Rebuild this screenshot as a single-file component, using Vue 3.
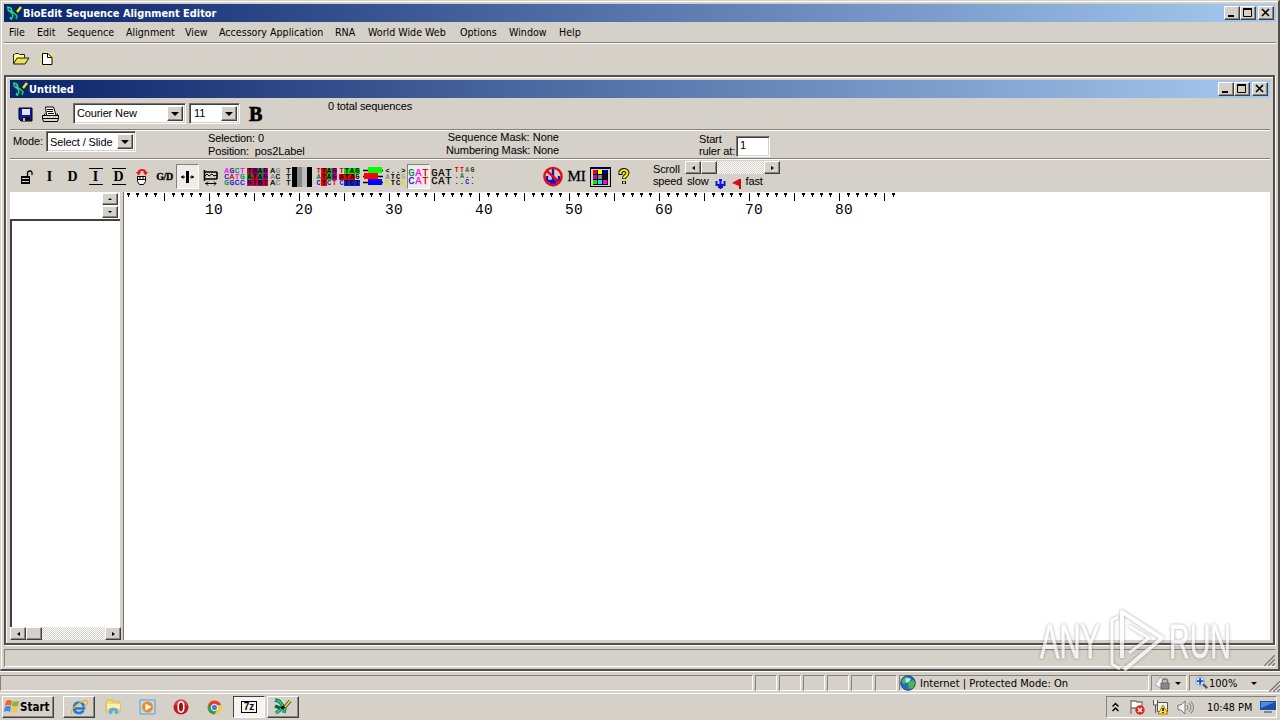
<script setup>
import {ref} from "vue";

const menu = [
    { text: 'File', width: 28 },
    { text: 'Edit', width: 30 },
    { text: 'Sequence', width: 59 },
    { text: 'Alignment', width: 59 },
    { text: 'View', width: 34 },
    { text: 'Accessory Application', width: 116 },
    { text: 'RNA', width: 33 },
    { text: 'World Wide Web', width: 92 },
    { text: 'Options', width: 49 },
    { text: 'Window', width: 50 },
    { text: 'Help', width: 30 },
];

const font = ref('Courier New');
const fontSize = ref('11');
const mode = ref('Select / Slide');
const rulerStart = ref('1');

const m = '#f0f', b = '#11c', g = '#084', r = '#d00', k = '#000', w = '#888', l = '#0d0', y = '#dd0', p = '#c0a';

// small letter grids: [letter, colour, background]
const grids = [
    { size: 8, rows: [[['A', m], ['G', b], ['C', g], ['T', m]], [['C', b], ['A', r], ['T', m], ['G', g]], [['G', g], ['G', b], ['C', b], ['C', b]]] },
    { size: 7, bold: true, rows: [[['T', k, '#c03'], ['G', k, '#808'], ['A', k, '#093'], ['G', k, p]], [['A', k, '#093'], ['T', k, '#c03'], ['A', k, '#084'], ['G', k, p]], [['G', k, p], ['T', k, '#c03'], ['G', k, '#808'], ['T', k, '#c03']]] },
    { size: 8, rows: [[['A', k], ['G', w], ['', k], ['T', k]], [['A', w], ['C', k], ['', k], ['T', k]], [['A', k], ['C', w], ['', k], ['T', k]]] },
    { bars: true },
    { size: 7, bold: true, rows: [[['T', r], ['T', k, '#e00'], ['A', k, '#0b3'], ['G', k, p]], [['A', g], ['T', k, '#e00'], ['A', k, '#0b3'], ['G', k, p]], [['C', b], ['T', k, '#e00'], ['C', b], ['T', r]]] },
    { size: 7, bold: true, rows: [[['T', r], ['T', k, l], ['A', k, l], ['G', k, l]], [['A', k, '#e00'], ['T', k, '#e00'], ['A', k, '#e00'], ['G', k]], [['C', b], ['T', k, '#12d'], ['C', k, '#12d'], ['T', k, '#12d']]] },
    { blocks: true },
    { size: 7, bold: true, rows: [[['<', k], ['.', k], ['.', k], ['>', k]], [['A', w], ['T', k], ['C', k], ['G', '#aa7']], [['G', y], ['T', k], ['C', k], ['G', y]]] },
    { size: 10.5, pressed: true, rows: [[['G', g], ['A', m], ['T', r]], [['C', b], ['A', m], ['T', r]]] },
    { size: 10.5, rows: [[['G', k], ['A', k], ['T', k]], [['C', k], ['A', k], ['T', k]]] },
    { size: 6.5, bold: true, rows: [[['T', r], ['T', r], ['A', '#464'], ['G', '#232']], [['.', k], ['A', g], ['.', k], ['.', k]], [['.', k], ['.', k], ['C', b], ['.', k]]] },
];

const ticks = Array.from({ length: 86 }, (_, i) => i + 1);
const panes = [22, 22, 22, 22, 22, 22];
const palette = ['#e00', '#ff0', '#00a', '#c0c', '#888', '#111', '#0e0', '#0ee', '#f0f'];
</script>

<template>
    <div class="desktop">
        <svg width="0" height="0" class="defs">
            <symbol id="helix" viewBox="0 0 17 17">
                <path d="M1 2l4 1 1 4 4 2M2 6l4 2 1 3-2 5M9 9l2 2-1 4" fill="none" stroke="#042e3c" stroke-width="3" />
                <path d="M1 2l4 1M5 3l1 4 4 2" fill="none" stroke="#2ce070" stroke-width="1.5" />
                <path d="M2 5l4 3 1 3-2 4M9 9l2 2-1 3" fill="none" stroke="#1cc890" stroke-width="1.6" />
                <path d="M2 3v2M4 6h2M5 12l-1 2" stroke="#3cf" stroke-width="1.3" />
                <path d="M9 8l3-3" stroke="#112" stroke-width="2" />
                <path d="M11 7l4-5" stroke="#f4e820" stroke-width="2.4" />
            </symbol>
            <symbol id="grip" viewBox="0 0 14 14">
                <path d="M2 14L14 2M6 14l8-8M10 14l4-4" stroke="#fff" stroke-width="1" />
                <path d="M3 14L14 3M7 14l7-7M11 14l3-3" stroke="#77736e" stroke-width="1.4" />
            </symbol>
        </svg>

        <div class="window">
            <div class="titlebar">
                <svg class="helix"><use href="#helix" /></svg>
                <span class="title">BioEdit Sequence Alignment Editor</span>
                <div class="controls">
                    <b><svg viewBox="0 0 14 12"><path d="M3 9h6" stroke="#000" stroke-width="2" /></svg></b>
                    <b><svg viewBox="0 0 14 12"><path d="M2.500 2v7.500h8V2" fill="none" stroke="#000" /><path d="M2 2h9" stroke="#000" stroke-width="2" /></svg></b>
                    <b class="close"><svg viewBox="0 0 14 12"><path d="M3 2l7 7M10 2l-7 7" stroke="#000" stroke-width="1.6" /></svg></b>
                </div>
            </div>
            <div class="menu">
                <span v-for="item in menu" :key="item.text" :style="{ width: item.width + 'px' }">{{ item.text }}</span>
            </div>
            <div class="toolbar">
                <svg width="18" height="14" viewBox="0 0 18 14">
                    <path d="M1.500 11.500v-9h1l1-1h3l1 1h5v3" fill="#ffff9c" stroke="#220" />
                    <path d="M1.500 12l3.500-6h12l-4 6z" fill="#e8e25c" stroke="#220" />
                </svg>
                <svg width="16" height="16" viewBox="0 0 16 16">
                    <path d="M1 2l2 2M1 8h2M1 14l2-2M7 0v2M14 2l-2 2M15 8h-2M14 14l-2-2M7 16v-2" stroke="#f4f040" stroke-width="2" />
                    <path d="M3.500 2.500h5.500l4 4v7h-9.500z" fill="#fff" stroke="#000" />
                    <path d="M8.500 2.500v4h4" fill="none" stroke="#000" />
                </svg>
            </div>

            <div class="mdi">
                <div class="titlebar child">
                    <svg class="helix"><use href="#helix" /></svg>
                    <span class="title">Untitled</span>
                    <div class="controls">
                        <b><svg viewBox="0 0 14 12"><path d="M3 9h6" stroke="#000" stroke-width="2" /></svg></b>
                        <b><svg viewBox="0 0 14 12"><path d="M2.500 2v7.500h8V2" fill="none" stroke="#000" /><path d="M2 2h9" stroke="#000" stroke-width="2" /></svg></b>
                        <b class="close"><svg viewBox="0 0 14 12"><path d="M3 2l7 7M10 2l-7 7" stroke="#000" stroke-width="1.6" /></svg></b>
                    </div>
                </div>

                <div class="row format">
                    <svg class="save" width="16" height="16" viewBox="0 0 16 16">
                        <path d="M1 1h13v13H3l-2-2z" fill="#1018b0" stroke="#000" />
                        <path d="M4 2h8v6H4z" fill="#e4e4f0" />
                        <path d="M4 10h8v4H4z" fill="#111" />
                        <path d="M5 11h2v3H5z" fill="#bbc" />
                    </svg>
                    <svg class="print" width="18" height="17" viewBox="0 0 18 17">
                        <path d="M4.500 9l-1-8h8l2.500 8" fill="#fff" stroke="#000" />
                        <path d="M5 3.500h6M5 5.500h6M6 7.500h6" stroke="#000" />
                        <path d="M.500 9.500h16v3l-1 3h-14l-1-3z" fill="#ddd9d0" stroke="#000" />
                        <path d="M1 12.500h15M2 9.500l1-2M16 9.500l-1-2" stroke="#000" />
                        <path d="M11 11h3" stroke="#cc0" />
                    </svg>
                    <div class="combo name"><span>{{ font }}</span><b></b></div>
                    <div class="combo size"><span>{{ fontSize }}</span><b></b></div>
                    <strong class="bold">B</strong>
                    <span class="total">0 total sequences</span>
                </div>

                <div class="row info">
                    <span class="mode">Mode:</span>
                    <div class="combo slide"><span>{{ mode }}</span><b></b></div>
                    <div class="lines selection"><span>Selection: 0</span><span>Position:&nbsp; pos2Label</span></div>
                    <div class="lines masks"><span>Sequence Mask: None</span><span>Numbering Mask: None</span></div>
                    <div class="lines start"><span>Start</span><span>ruler at:</span></div>
                    <div class="field">{{ rulerStart }}</div>
                </div>

                <div class="row tools">
                    <i><svg width="15" height="16" viewBox="0 0 15 16"><path d="M2 7h9v8H2z" fill="#000" /><path d="M3 9.500h7M3 12.500h7" stroke="#d4d0c8" /><path d="M8.500 7V4q0-2 2.500-2t2 3v1" fill="none" stroke="#000" stroke-width="1.3" /></svg></i>
                    <i class="serif">I</i>
                    <i class="serif">D</i>
                    <i class="serif over">I</i>
                    <i class="serif over">D</i>
                    <i><svg width="14" height="18" viewBox="0 0 14 18"><path d="M3.500 5q0-3 3.500-3t3.500 3" fill="none" stroke="#e31818" stroke-width="2" /><path d="M1 4h5L3.500 7.500zM8 4h5l-2.500 3.500z" fill="#e31818" /><path d="M2.500 8.500h8v5l-2 3h-4l-2-3zM2.500 11.500h8M5 8v3.500M8 8v3.500" fill="#fff" stroke="#000" /></svg></i>
                    <i class="serif gd">G/D</i>
                    <i class="pressed"><svg width="17" height="17" viewBox="0 0 17 17"><path d="M8.500 3v12" stroke="#000" stroke-width="3" /><path d="M2 9h4M11 9h4" stroke="#000" /><path d="M4.500 7v4L2 9zM12.500 7v4L15 9z" fill="#000" /></svg></i>
                    <i><svg width="16" height="18" viewBox="0 0 16 18"><path d="M1.500 2v11M1 4h13M1 11h13M14 4v7" fill="none" stroke="#000" stroke-width="1.600" /><path d="M2 8l2-2 2 2 3-2 2 2 3-1" fill="none" stroke="#000" /><path d="M2 15.500h11M5 13.500l-2 2 2 2M11 13.500l2 2-2 2" fill="none" stroke="#000" /></svg></i>
                    <i v-for="(grid, n) in grids" :key="n" :class="{ pressed: grid.pressed, first: n === 0 }">
                        <svg v-if="grid.bars" width="23" height="20" viewBox="0 0 23 20">
                            <path d="M0 0h5v20H0zM15 0h5v20h-5z" fill="#000" /><path d="M5 0h5v20H5z" fill="#888" /><path d="M10 0h5v20h-5z" fill="#c0bdb8" />
                        </svg>
                        <svg v-else-if="grid.blocks" width="20" height="19" viewBox="0 0 20 19">
                            <path d="M0 3.500h20M0 9.500h20M0 15.500h20" stroke="#000" stroke-width="1.5" />
                            <path d="M5 0h14v6H5z" fill="#0f0" /><path d="M1 6h14v6H1z" fill="#f00" /><path d="M5 12h14v6H5z" fill="#00f" />
                        </svg>
                        <span v-else class="grid" :class="{ heavy: grid.bold, two: grid.rows.length === 2 }" :style="{ fontSize: grid.size + 'px' }">
                            <span v-for="(row, i) in grid.rows" :key="i">
                                <em v-for="(cell, j) in row" :key="j" :style="{ color: cell[1], background: cell[2] }">{{ cell[0] }}</em>
                            </span>
                        </span>
                    </i>
                    <i class="anchor"><svg width="20" height="21" viewBox="0 0 20 21"><path d="M10 2v15M4 10v5h12v-5M7 16l3 3 3-3" fill="none" stroke="#11c" stroke-width="2.400" /><circle cx="10" cy="10.500" r="8.600" fill="none" stroke="#e00c18" stroke-width="2.400" /><path d="M4 5l12 11" stroke="#e00c18" stroke-width="2.400" /></svg></i>
                    <i class="serif mi">MI</i>
                    <i class="table">
                        <span><u v-for="c in palette" :key="c" :style="{ background: c }"></u></span>
                    </i>
                    <i><svg width="12" height="17" viewBox="0 0 12 17"><path d="M2.500 7V4q1-2 3.500-2t3.500 2.500q0 2-2 3.500-1.500 1-1.500 3M6 13v3" fill="none" stroke="#000" stroke-width="4" /><path d="M2.500 6V4q1-2 3.500-2t3.500 2.500q0 2-2 3.500-1.500 1-1.500 2.500M6 13.500v2" fill="none" stroke="#fff200" stroke-width="2.200" /></svg></i>
                    <div class="lines scroll"><span>Scroll</span><span>speed</span></div>
                    <div class="speed">
                        <div class="scrollbar"><b class="left"></b><b class="thumb"></b><s></s><b class="right"></b></div>
                        <div class="labels">
                            <span>slow</span>
                            <svg width="11" height="12" viewBox="0 0 11 12"><path d="M5.500 1v10M1.500 3v4h8V3M3 9h5M4 2h3" fill="none" stroke="#11d" stroke-width="2" /></svg>
                            <svg width="10" height="12" viewBox="0 0 10 12"><path d="M0 5l7-4v7z" fill="#e00c18" /><path d="M8 1v10" stroke="#c00c18" stroke-width="2" /></svg>
                            <span>fast</span>
                        </div>
                    </div>
                </div>

                <div class="document">
                    <div class="names">
                        <div class="entry"><div class="spin"><b class="up"></b><b class="down"></b></div></div>
                        <div class="list"></div>
                        <div class="scrollbar big"><b class="left"></b><b class="thumb"></b><s></s><b class="right"></b></div>
                    </div>
                    <div class="sequences">
                        <div class="ruler">
                            <div v-for="n in ticks" :key="n" class="tick" :class="{ major: n % 5 === 0 }">
                                <span v-if="n % 10 === 0">{{ n }}</span>
                            </div>
                        </div>
                    </div>
                </div>
            </div>

            <div class="statusbar"><svg class="grip"><use href="#grip" /></svg></div>
        </div>

        <div class="browser">
            <div class="pane wide"></div>
            <div v-for="(pane, i) in panes" :key="i" class="pane" :style="{ width: pane + 'px' }"></div>
            <div class="pane zone">
                <svg width="16" height="16" viewBox="0 0 16 16"><circle cx="8" cy="8" r="7.300" fill="#2468c4" stroke="#264c7c" /><path d="M2 5q3-4 6-3l1 2-3 2-1 3-3-1zM9 7l4-2 2 3-2 5-4 1-1-4z" fill="#48b848" /><path d="M5 4q3-2 6 0l-2 3-3 1z" fill="#aee8f0" /></svg>
                <span>Internet | Protected Mode: On</span>
            </div>
            <div class="pane lock">
                <svg width="18" height="16" viewBox="0 0 18 16"><path d="M1 10l5-8 4 2 2 5-5 4z" fill="#f2f2f2" stroke="#aaa" /><path d="M8.500 8V6q0-2 2.500-2t2.500 2v2" fill="none" stroke="#777" stroke-width="1.500" /><path d="M7 8h8v6H7z" fill="#888" stroke="#666" /></svg>
                <u class="arrow"></u>
            </div>
            <div class="pane zoom">
                <svg width="13" height="14" viewBox="0 0 14 15"><path d="M8 8l5 5" stroke="#555" stroke-width="2.500" /><circle cx="5.500" cy="5.500" r="4.600" fill="#dceeff" stroke="#6aa0d8" /><path d="M5.500 2v7M2 5.500h7" stroke="#1550c8" stroke-width="2" /></svg>
                <span>100%</span>
                <u class="arrow"></u>
                <svg class="grip"><use href="#grip" /></svg>
            </div>
        </div>

        <div class="taskbar">
            <div class="task begin">
                <svg width="17" height="16" viewBox="0 0 17 16"><path d="M3 2q3-2 6 0L8 7Q5 5 2 7z" fill="#f06428" /><path d="M10 2q3 1 6 0l-1 5q-3 1-6 0z" fill="#7cba3c" /><path d="M2 8q3-2 6 0l-1 5q-3-2-6 0z" fill="#3c8ce0" /><path d="M9 8q3 1 6 0l-1 5q-3 1-6 0z" fill="#f8c83c" /></svg>
                <strong>Start</strong>
            </div>
            <div class="task ie">
                <svg width="18" height="17" viewBox="0 0 18 17"><path d="M4 9.500h10q0-6-5-6t-5 5.500q0 5 5 5 3 0 4.500-2.500" fill="none" stroke="#2478d8" stroke-width="2.600" /><path d="M2 15Q-1 12 7 6t10-4q2 2-3 6" fill="none" stroke="#e8b828" stroke-width="1.400" /></svg>
            </div>
            <svg class="app folder" width="17" height="16" viewBox="0 0 17 16"><path d="M1 3l1-2h5l1 2h7v10H1z" fill="#f2d878" stroke="#d8b850" /><path d="M2 5h13v5H2z" fill="#fcf0a8" /><path d="M4 15v-5q4-3 9 0v5h-3v-3H7v3z" fill="#5cb0e0" /></svg>
            <svg class="app player" width="17" height="16" viewBox="0 0 17 16"><path d="M1 1h15v14H1z" fill="#bcdcf4" stroke="#5a9cd4" /><circle cx="8.500" cy="8" r="5.500" fill="#f48818" /><path d="M6.500 4.500v7l6-3.500z" fill="#fff" /></svg>
            <svg class="app" width="16" height="16" viewBox="0 0 16 16"><circle cx="8" cy="8" r="7.500" fill="#c41820" /><path d="M1 6q2-6 7-5.500T15 6z" fill="#e06460" opacity=".6" /><ellipse cx="8" cy="8" rx="2.800" ry="5.200" fill="#a01018" stroke="#fff" stroke-width="1.500" /></svg>
            <svg class="app chrome" width="15" height="15" viewBox="0 0 15 15"><circle cx="7.500" cy="7.500" r="7" fill="#f8cc30" /><path d="M1.500 4A7 7 0 0 1 14 5H7l-3 5z" fill="#e04030" /><path d="M1.500 4a7 7 0 0 0 6 10.500L10 10 4.500 9z" fill="#30a050" /><circle cx="7.500" cy="7.500" r="3.200" fill="#3c80e8" stroke="#fff" /></svg>
            <div class="task active"><span>7z</span></div>
            <div class="task bio">
                <svg width="20" height="18" viewBox="0 0 20 18"><path d="M2 2l4 1 4 5M2 8l5 2M10 9l-3 3-4 3M12 10l-1 5" fill="none" stroke="#064" stroke-width="3.400" /><path d="M2 2l4 1 4 5M10 9l-3 3-4 3M12 10l-1 5" fill="none" stroke="#1ed080" stroke-width="1.800" /><path d="M8 10l5-2" stroke="#000" stroke-width="2.500" /><path d="M12 9l5-6" stroke="#443" stroke-width="3.500" /><path d="M12 9l5-6" stroke="#f0e020" stroke-width="1.800" /></svg>
            </div>
            <div class="tray">
                <svg class="chevrons" width="7" height="10" viewBox="0 0 7 10"><path d="M.5 4.500l3-3 3 3M.5 9l3-3 3 3" fill="none" stroke="#000" stroke-width="1.500" /></svg>
                <svg class="flag" width="16" height="16" viewBox="0 0 16 16"><path d="M2 1v14M2 2h5l1 1h5v8H8L7 9H2" fill="#fff" stroke="#777" stroke-width="1.300" /><circle cx="11" cy="11" r="4.700" fill="#e02420" /><path d="M9 9l4 4M13 9l-4 4" stroke="#fff" stroke-width="1.500" /></svg>
                <svg class="net" width="17" height="16" viewBox="0 0 17 16"><path d="M5.500 3.500h10v9h-10zM1.500 1v5h4V1M3.500 6v8" fill="#eee" stroke="#555" /><path d="M11 6l5 9H6z" fill="#ffe030" stroke="#a88400" /><path d="M11 9v3M11 13v1" stroke="#000" stroke-width="1.500" /></svg>
                <svg class="sound" width="18" height="15" viewBox="0 0 18 15"><path d="M1 5h3l4-4v13l-4-4H1z" fill="#f4f4f4" stroke="#777" /><path d="M10 5q2 2.500 0 5M12 3q4 4.500 0 9M14 1.500q5 6 0 12" fill="none" stroke="#777" /></svg>
                <span class="clock">10:48 PM</span>
                <svg width="16" height="14" viewBox="0 0 16 14"><path d="M0 1h16v9H0z" fill="#1c50a8" /><path d="M1 2h14L1 8z" fill="#4c90e0" /><path d="M4 12h8" stroke="#789" stroke-width="2" /></svg>
            </div>
        </div>

        <svg class="watermark" width="204" height="72" viewBox="0 0 204 72">
            <g fill="#fff" stroke="#fff" stroke-width=".8">
                <text x="4" y="52" textLength="60" lengthAdjust="spacingAndGlyphs">ANY</text>
                <text x="133" y="52" textLength="62" lengthAdjust="spacingAndGlyphs">RUN</text>
            </g>
            <g fill="none" stroke="#fff" stroke-width="4" stroke-linejoin="round">
                <path d="M86 52V6l40 26-38 32" />
                <path d="M93 20l20 12-20 15" stroke-width="3" />
                <path d="M82 11l-6 3v44l8 5" stroke-width="3" />
            </g>
        </svg>
    </div>
</template>

<style>
body {
    overflow: hidden;
    background: #d5d0c8;
}
</style>

<style scoped>
* {
    box-sizing: border-box;
}

.desktop {
    position: relative;
    width: 1280px;
    height: 720px;
    background: #d5d0c8;
    color: #000;
    font: 10.6px/13px "DejaVu Sans Condensed", "DejaVu Sans", sans-serif;
    white-space: nowrap;
    overflow: hidden;
}

.defs {
    position: absolute;
}

svg {
    display: block;
    flex: none;
}

i, em {
    font-style: normal;
}

.window {
    display: flex;
    flex-direction: column;
    height: 671px;
    padding: 2px 2px 0 3px;
    border: 1px solid #d5d0c8;
    border-right: 2px solid #504d4a;
    border-bottom: 2px solid #504d4a;
    box-shadow: inset 1px 1px #fff;
}

.titlebar {
    display: flex;
    align-items: center;
    flex: none;
    height: 18px;
    margin-top: 1px;
    padding: 0 2px;
    background: linear-gradient(90deg, #0a246a, #a6caf0);
}

.helix {
    width: 17px;
    height: 17px;
}

.title {
    flex: 1;
    color: #fff;
    font-weight: bold;
    font-size: 10.9px;
}

.controls {
    display: flex;
}

.controls b {
    width: 16px;
    height: 14px;
    background: #d5d0c8;
    border: 1px solid;
    border-color: #fff #404040 #404040 #fff;
    box-shadow: inset -1px -1px #8a8680;
}

.controls svg {
    width: 14px;
    height: 12px;
}

.controls .close {
    margin-left: 2px;
}

.menu {
    display: flex;
    align-items: center;
    flex: none;
    height: 21px;
    padding-left: 5px;
    border-bottom: 1px solid #858079;
}

.menu span {
    flex: none;
}

.toolbar {
    display: flex;
    align-items: center;
    gap: 9px;
    flex: none;
    height: 32px;
    padding: 0 0 1px 8px;
    border-top: 1px solid #fff;
}

.mdi {
    display: flex;
    flex-direction: column;
    flex: none;
    height: 570px;
    margin-right: 1px;
    padding: 3px 3px 3px 4px;
    border: 2px solid #514e4b;
    box-shadow: inset 1px 1px #fff, 1px 1px #fff;
    font-family: "Liberation Sans", sans-serif;
    font-size: 11px;
    letter-spacing: -.13px;
}

.child {
    margin: 0;
    font-family: "DejaVu Sans Condensed", "DejaVu Sans", sans-serif;
    letter-spacing: 0;
}

.row {
    display: flex;
    flex: none;
    border-bottom: 1px solid #858079;
    box-shadow: inset 0 1px #fff;
}

.format {
    height: 32px;
    box-shadow: none;
}

.save {
    margin: 9px 0 0 8px;
}

.print {
    margin: 8px 0 0 8px;
}

.combo, .field {
    display: flex;
    background: #fff;
    border: 1px solid;
    border-color: #77736e #fff #fff #77736e;
    box-shadow: inset 1px 1px #404040, inset -1px -1px #d5d0c8;
    padding: 2px;
    height: 21px;
}

.combo span {
    flex: 1;
    padding: 1px 0 0 1px;
}

.combo b, .spin b, .scrollbar b {
    display: flex;
    align-items: center;
    justify-content: center;
    width: 16px;
    background: #d5d0c8;
    border: 1px solid;
    border-color: #fff #404040 #404040 #fff;
    box-shadow: inset -1px -1px #8a8680;
}

.combo b::after, .arrow {
    content: "";
    border: 4px solid transparent;
    border-top-color: #000;
    border-bottom: 0;
}

.name {
    width: 113px;
    margin: 5px 0 0 13px;
}

.size {
    width: 51px;
    margin: 5px 0 0 3px;
}

.size span {
    padding-left: 2px;
}

.bold {
    width: 14px;
    margin: 7px 0 0 9px;
    font: bold 20px/18px "Liberation Serif", serif;
    -webkit-text-stroke: .7px #000;
}

.total {
    margin: 2px 0 0 65px;
}

.info {
    height: 29px;
}

.mode {
    width: 33px;
    padding: 5px 0 0 3px;
}

.slide {
    width: 90px;
    margin: 1px 0 0 3px;
}

.slide span {
    padding-top: 2px;
}

.lines {
    display: flex;
    flex-direction: column;
}

.selection {
    width: 238px;
    margin: 2px 0 0 72px;
}

.selection span {
    height: 12.5px;
}

.masks {
    align-items: flex-end;
    width: 113px;
    margin-top: 1px;
}

.masks span:first-child {
    letter-spacing: 0;
}

.start {
    width: 37px;
    margin: 3px 0 0 140px;
    line-height: 12px;
}

.field {
    width: 34px;
    margin-top: 6px;
    padding: 2px 3px;
}

.tools {
    height: 33px;
    padding-left: 5px;
    border-bottom: 0;
}

.tools i {
    display: flex;
    align-items: center;
    justify-content: center;
    flex: none;
    width: 23px;
    height: 25px;
    margin-top: 5px;
}

.tools .first {
    margin-left: 1px;
}

.tools .serif {
    font: bold 14px/13px "Liberation Serif", serif;
}

.tools .over::before {
    content: "";
    position: absolute;
    width: 14px;
    height: 15px;
    border: solid #000;
    border-width: 1.5px 0;
}

.tools .gd {
    font-size: 10px;
    letter-spacing: -.4px;
    -webkit-text-stroke: .3px #000;
}

.tools .pressed {
    background: #efedea;
    border: 1px solid;
    border-color: #858079 #fff #fff #858079;
}

.grid {
    display: flex;
    flex: none;
    flex-direction: column;
    width: 21px;
    font-family: "Liberation Mono", monospace;
    letter-spacing: 0;
    -webkit-text-stroke-width: .25px;
}

.grid span {
    display: grid;
    grid-template-columns: repeat(4, 5.25px);
    height: 6px;
    line-height: 6px;
    text-align: center;
}

.grid.two span {
    grid-template-columns: repeat(3, 7px);
    height: 8px;
    line-height: 8px;
}

.heavy {
    font-weight: bold;
    -webkit-text-stroke-width: 0;
}

.tools .anchor {
    margin-left: 65px;
}

.tools .mi {
    width: 25px;
    font-size: 15px;
    font-weight: normal;
    -webkit-text-stroke: .3px #000;
}

.table span {
    display: grid;
    grid-template-columns: repeat(3, 5px);
    grid-auto-rows: 5px;
    padding: 1px 2px;
    border: 1px solid #000;
    border-top: 2px solid #003;
}

.table u {
    border: 0 solid #000;
    border-width: 0 1px 1px 0;
}

.scroll {
    width: 32px;
    margin: 4px 0 0 18px;
    line-height: 12px;
}

.speed {
    width: 100px;
    padding-top: 2px;
}

.scrollbar {
    display: flex;
    width: 95px;
    height: 13px;
    background: #e9e6e1;
}

.scrollbar s {
    flex: 1;
    background: repeating-conic-gradient(#fff 0 25%, #d5d0c8 0 50%) 0 0 / 2px 2px;
}

.left::after, .right::after {
    content: "";
    border: 2.5px solid transparent;
    border-right: 3px solid #000;
    border-left: 0;
}

.right::after {
    border-right: 0;
    border-left: 3px solid #000;
}

.labels {
    display: flex;
    align-items: flex-end;
    height: 14px;
    padding-left: 2px;
}

.labels svg {
    margin: 0 0 -2px 6px;
}

.labels span + svg {
    margin-left: 6px;
}

.labels svg + span {
    margin-left: 4px;
}

.document {
    display: flex;
    flex: 1;
    background: #fff;
}

.names {
    display: flex;
    flex-direction: column;
    width: 114px;
    border-right: 1px solid #77736e;
    box-shadow: inset -3px 0 #d5d0c8;
}

.entry {
    display: flex;
    justify-content: flex-end;
    height: 27px;
    padding: 1px 5px 1px 0;
}

.spin b {
    height: 12px;
    margin-bottom: 1px;
}

.spin b::after {
    content: "";
    border: 2px solid transparent;
    border-bottom-color: #000;
    border-top: 0;
}

.spin .down::after {
    border-bottom: 0;
    border-top: 2px solid #000;
}

.list {
    flex: 1;
    width: 110px;
    border-left: 2px solid #404040;
    border-top: 2px solid #404040;
}

.big {
    width: 111px;
}

.sequences {
    flex: 1;
}

.ruler {
    display: flex;
    height: 27px;
    padding-top: 1px;
}

.tick {
    width: 9px;
    height: 4px;
    font: 14.5px/15px "Liberation Mono", monospace;
    letter-spacing: .2px;
    background: linear-gradient(#000, #000) 3px 0 / 3px 2px no-repeat, linear-gradient(#000, #000) 4px 2px / 1px 2px no-repeat;
}

.tick.major {
    height: 8px;
    background: linear-gradient(#000, #000) 4px 0 / 1px 8px no-repeat;
}

.tick span {
    display: block;
    margin-top: 10px;
}

.statusbar {
    display: flex;
    align-items: flex-end;
    justify-content: flex-end;
    height: 18px;
    margin-top: 4px;
    border: 1px solid;
    border-color: #858079 transparent #fff #858079;
}

.grip {
    width: 14px;
    height: 14px;
}

.browser {
    display: flex;
    gap: 2px;
    height: 23px;
    padding: 3px 0 2px;
    border-top: 1px solid #fff;
    border-bottom: 1px solid #fff;
}

.pane {
    display: flex;
    align-items: center;
    flex: none;
    border: 1px solid;
    border-color: #858079 #fff #fff #858079;
}

.wide {
    width: 753px;
}

.zone {
    width: 250px;
    gap: 4px;
    font-size: 11.1px;
}

.lock {
    width: 36px;
    padding-left: 2px;
    gap: 3px;
}

.arrow {
    border-width: 3px 3px 0;
}

.zoom {
    flex: 1;
    padding-left: 5px;
    border-right: 0;
    font-size: 11px;
}

.zoom span {
    padding-left: 1px;
}

.zoom .arrow {
    margin-left: 14px;
}

.zoom .grip {
    margin: 3px 0 0 auto;
}

.taskbar {
    display: flex;
    align-items: center;
    height: 26px;
    padding-left: 2px;
}

.task {
    display: flex;
    align-items: center;
    justify-content: center;
    width: 32px;
    height: 22px;
    border: 1px solid;
    border-color: #fff #404040 #404040 #fff;
    box-shadow: inset -1px -1px #8a8680;
}

.begin {
    width: 52px;
    justify-content: flex-start;
    font-size: 11.5px;
}

.ie {
    margin: 0 10px 0 9px;
}

.app {
    margin-right: 17px;
}

.app.chrome {
    margin: 0 11px 0 1px;
}

.active {
    margin-right: 2px;
    border-color: #404040 #fff #fff #404040;
    background: #f6f4f1;
    box-shadow: none;
}

.active span {
    width: 16px;
    height: 12px;
    border: 1.5px solid #000;
    font: bold 10px/9px "Liberation Sans", sans-serif;
    text-align: center;
}

.tray {
    display: flex;
    align-items: center;
    width: 171px;
    height: 22px;
    margin: 0 3px 0 auto;
    padding-left: 5px;
    border: 1px solid;
    border-color: #858079 #fff #fff #858079;
}

.flag {
    margin-left: 10px;
}

.net {
    margin-left: 7px;
}

.sound {
    margin-left: 8px;
}

.clock {
    width: 46px;
    margin: 0 7px 0 12px;
    font-size: 10.8px;
}

.watermark {
    position: absolute;
    left: 1036px;
    top: 606px;
    overflow: visible;
    opacity: .72;
    filter: drop-shadow(0 0 1.5px rgba(90, 90, 90, .75));
}

.watermark text {
    font: 49px "Liberation Sans", sans-serif;
}
</style>
